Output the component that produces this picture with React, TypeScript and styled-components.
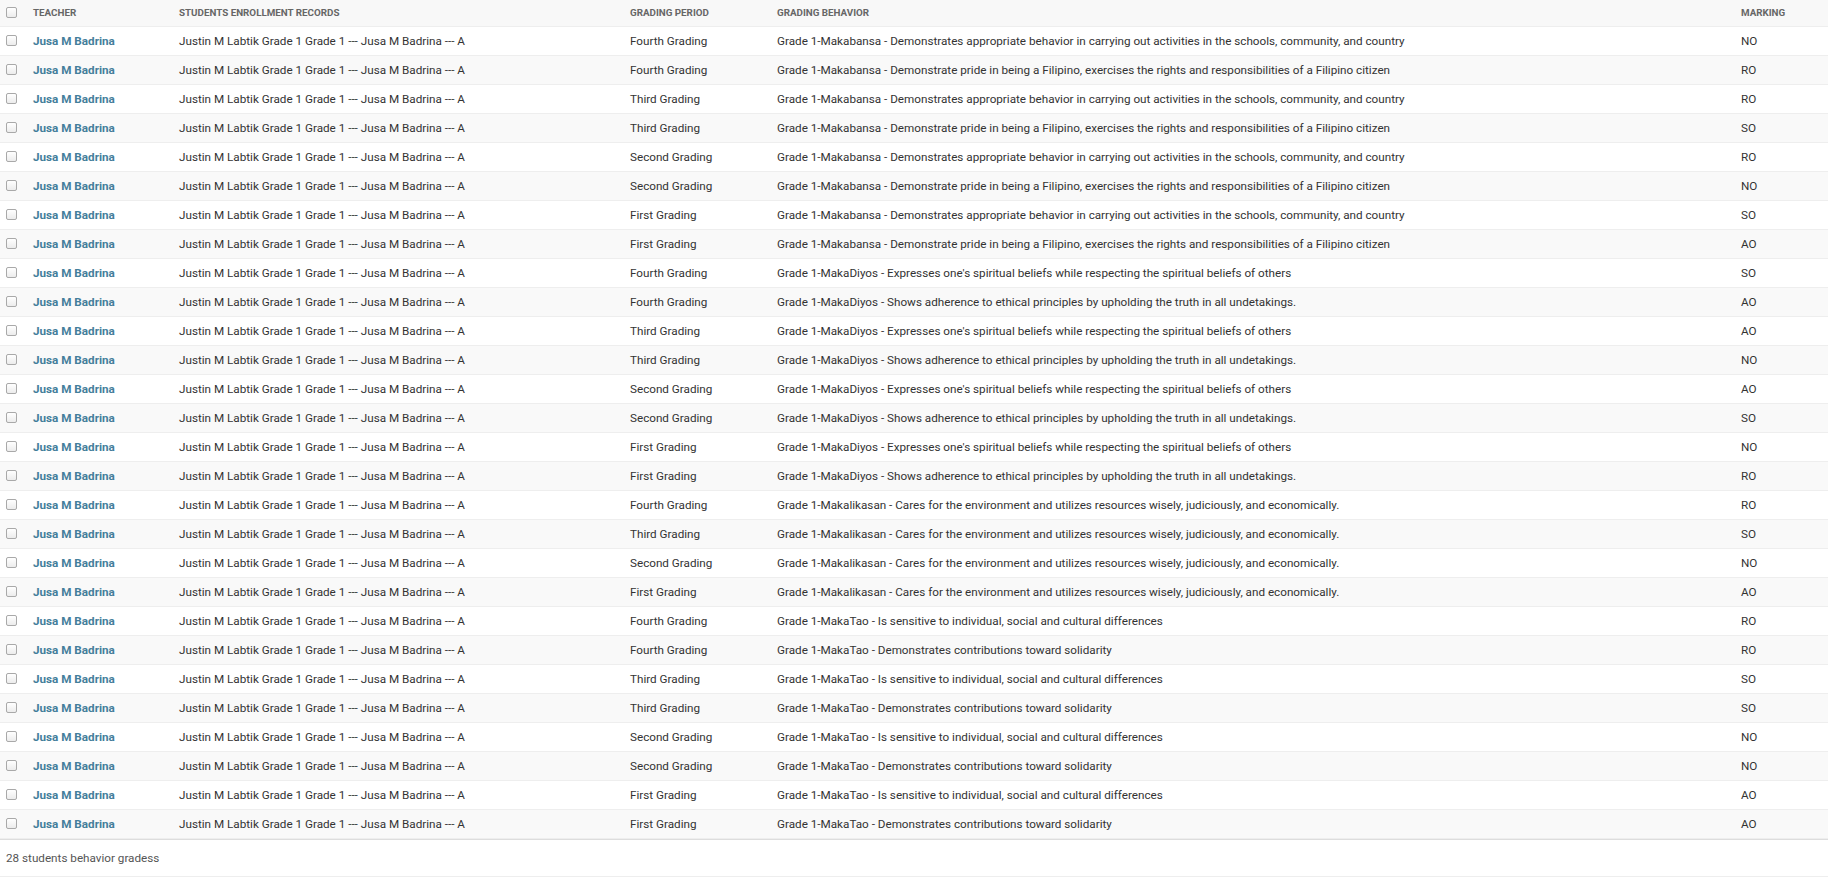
import React from "react";
import styled, { createGlobalStyle } from "styled-components";

const GlobalStyle = createGlobalStyle`
  html, body { margin: 0; padding: 0; background: #fff; }
  body { font-family: Roboto, "Liberation Sans", sans-serif; color: #333; }
`;

const Page = styled.div`
  width: 1828px;
`;

const Table = styled.table`
  width: 1828px;
  border-collapse: collapse;
  table-layout: fixed;
`;

const HeadRow = styled.tr`
  background: #f8f8f8;
`;

const Th = styled.th`
  height: 26px;
  padding: 0 8px;
  box-sizing: border-box;
  text-align: left;
  font-size: 9.8px;
  font-weight: 700;
  color: #666;
  text-transform: uppercase;
  border-bottom: 1px solid #eee;
  vertical-align: middle;
  white-space: nowrap;
`;

const Row = styled.tr<{ $alt: boolean }>`
  background: ${(p) => (p.$alt ? "#f9f9f9" : "#fff")};
`;

const Td = styled.td`
  height: 29px;
  padding: 0 8px;
  box-sizing: border-box;
  font-size: 11.7px;
  color: #333;
  border-bottom: 1px solid #eee;
  vertical-align: middle;
  white-space: nowrap;
`;

const CheckCell = styled.td`
  height: 29px;
  padding: 0 0 0 6px;
  box-sizing: border-box;
  border-bottom: 1px solid #eee;
  vertical-align: middle;
`;

const CheckHead = styled.th`
  height: 26px;
  padding: 0 0 0 6px;
  box-sizing: border-box;
  border-bottom: 1px solid #eee;
  vertical-align: middle;
  text-align: left;
`;

const Box = styled.span`
  display: block;
  width: 9px;
  height: 9px;
  border: 1px solid #a9a9a9;
  border-radius: 2px;
  background: linear-gradient(#fff, #ececec);
`;

const TeacherLink = styled.a`
  color: #447e9b;
  font-weight: 700;
  text-decoration: none;
`;

const Footer = styled.p`
  margin: 0;
  width: 1828px;
  box-sizing: border-box;
  height: 38px;
  padding: 0 6px;
  display: flex;
  align-items: center;
  font-size: 11.7px;
  color: #555;
  border-top: 1px solid #ddd;
  border-bottom: 1px solid #eee;
`;

const BANSA_A =
  "Grade 1-Makabansa - Demonstrates appropriate behavior in carrying out activities in the schools, community, and country";
const BANSA_B =
  "Grade 1-Makabansa - Demonstrate pride in being a Filipino, exercises the rights and responsibilities of a Filipino citizen";
const DIYOS_A =
  "Grade 1-MakaDiyos - Expresses one's spiritual beliefs while respecting the spiritual beliefs of others";
const DIYOS_B =
  "Grade 1-MakaDiyos - Shows adherence to ethical principles by upholding the truth in all undetakings.";
const KALIKASAN =
  "Grade 1-Makalikasan - Cares for the environment and utilizes resources wisely, judiciously, and economically.";
const TAO_A = "Grade 1-MakaTao - Is sensitive to individual, social and cultural differences";
const TAO_B = "Grade 1-MakaTao - Demonstrates contributions toward solidarity";

const rows: [string, string, string][] = [
  ["Fourth Grading", BANSA_A, "NO"],
  ["Fourth Grading", BANSA_B, "RO"],
  ["Third Grading", BANSA_A, "RO"],
  ["Third Grading", BANSA_B, "SO"],
  ["Second Grading", BANSA_A, "RO"],
  ["Second Grading", BANSA_B, "NO"],
  ["First Grading", BANSA_A, "SO"],
  ["First Grading", BANSA_B, "AO"],
  ["Fourth Grading", DIYOS_A, "SO"],
  ["Fourth Grading", DIYOS_B, "AO"],
  ["Third Grading", DIYOS_A, "AO"],
  ["Third Grading", DIYOS_B, "NO"],
  ["Second Grading", DIYOS_A, "AO"],
  ["Second Grading", DIYOS_B, "SO"],
  ["First Grading", DIYOS_A, "NO"],
  ["First Grading", DIYOS_B, "RO"],
  ["Fourth Grading", KALIKASAN, "RO"],
  ["Third Grading", KALIKASAN, "SO"],
  ["Second Grading", KALIKASAN, "NO"],
  ["First Grading", KALIKASAN, "AO"],
  ["Fourth Grading", TAO_A, "RO"],
  ["Fourth Grading", TAO_B, "RO"],
  ["Third Grading", TAO_A, "SO"],
  ["Third Grading", TAO_B, "SO"],
  ["Second Grading", TAO_A, "NO"],
  ["Second Grading", TAO_B, "NO"],
  ["First Grading", TAO_A, "AO"],
  ["First Grading", TAO_B, "AO"],
];

const ENROLLMENT = "Justin M Labtik Grade 1 Grade 1 --- Jusa M Badrina --- A";

export default function App() {
  return (
    <Page>
      <GlobalStyle />
      <Table>
        <colgroup>
          <col style={{ width: 25 }} />
          <col style={{ width: 146 }} />
          <col style={{ width: 451 }} />
          <col style={{ width: 147 }} />
          <col style={{ width: 964 }} />
          <col style={{ width: 95 }} />
        </colgroup>
        <thead>
          <HeadRow>
            <CheckHead>
              <Box />
            </CheckHead>
            <Th>Teacher</Th>
            <Th>Students Enrollment Records</Th>
            <Th>Grading Period</Th>
            <Th>Grading Behavior</Th>
            <Th>Marking</Th>
          </HeadRow>
        </thead>
        <tbody>
          {rows.map(([period, behavior, mark], i) => (
            <Row key={i} $alt={i % 2 === 1}>
              <CheckCell>
                <Box />
              </CheckCell>
              <Td>
                <TeacherLink href="#">Jusa M Badrina</TeacherLink>
              </Td>
              <Td>{ENROLLMENT}</Td>
              <Td>{period}</Td>
              <Td>{behavior}</Td>
              <Td>{mark}</Td>
            </Row>
          ))}
        </tbody>
      </Table>
      <Footer>28 students behavior gradess</Footer>
    </Page>
  );
}
